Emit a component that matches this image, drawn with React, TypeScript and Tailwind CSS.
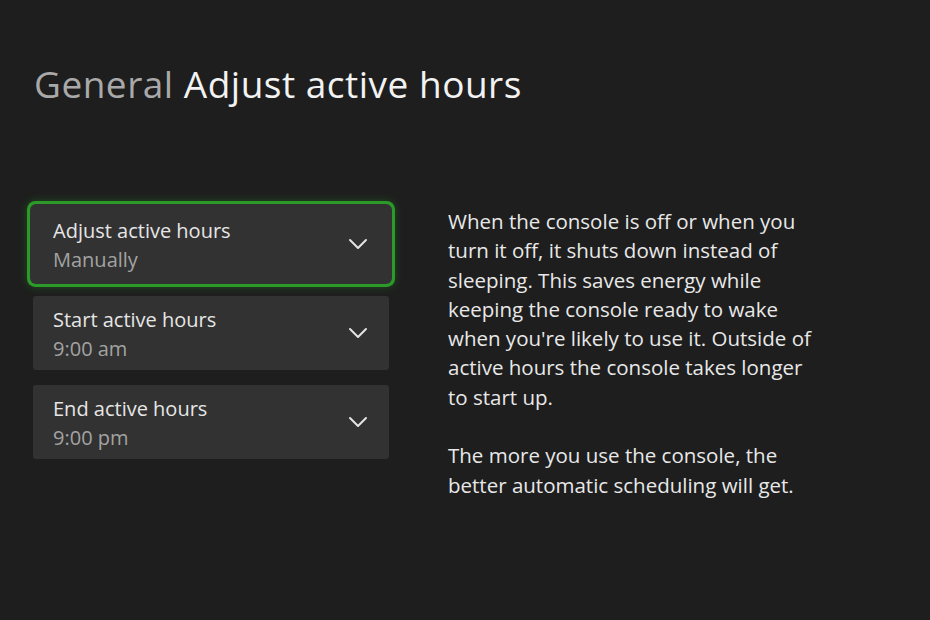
import React from 'react';

// Dropdown rows on the left side of the settings page
const rows = [
  { id: 1, label: 'Adjust active hours', value: 'Manually', focused: true },
  { id: 2, label: 'Start active hours', value: '9:00 am', focused: false },
  { id: 3, label: 'End active hours', value: '9:00 pm', focused: false },
];

const Chevron: React.FC = () => (
  <svg className="h-[12px] w-[20px] text-[#e4e4e4]" viewBox="0 0 20 12" fill="none" stroke="currentColor">
    <path d="M2 2l8 8 8-8" strokeWidth={2} strokeLinecap="round" strokeLinejoin="round" />
  </svg>
);

const Row: React.FC<{ label: string; value: string; focused: boolean }> = ({ label, value, focused }) => (
  <div
    className={`flex h-[74px] w-[356px] items-center justify-between rounded-[3px] bg-[#323232] pl-[20px] pr-[21px] ${
      focused ? 'shadow-[0_0_0_3px_#323232,0_0_0_6px_#2b9a28,0_0_8px_6px_rgba(40,160,40,0.35)]' : ''
    }`}
  >
    <div className="flex flex-col pt-[1px]">
      <span className="text-[20px] leading-[29px] text-[#e6e6e6]">{label}</span>
      <span className="text-[20px] leading-[29px] text-[#a3a3a3]">{value}</span>
    </div>
    <Chevron />
  </div>
);

export default function App() {
  return (
    <div
      className="h-[620px] w-[930px] overflow-hidden bg-[#1e1e1e] pl-[33px]"
      style={{ fontFamily: '"Open Sans", "Noto Sans", sans-serif' }}
    >
      <h1 className="pl-[1px] pt-[56px] text-[37px] leading-[56px] tracking-[0.5px]">
        <span className="text-[#a9a9a9]">General</span>{' '}
        <span className="text-[#f2f2f2]">Adjust active hours</span>
      </h1>

      <div className="mt-[95px] flex">
        <div className="flex flex-col gap-[15px]">
          {rows.map((r) => (
            <Row key={r.id} label={r.label} value={r.value} focused={r.focused} />
          ))}
        </div>

        <div className="ml-[59px] w-[370px] text-[20.5px] leading-[29.3px] text-[#e8e8e8]">
          <p>
            When the console is off or when you turn it off, it shuts down instead of sleeping. This saves
            energy while keeping the console ready to wake when you're likely to use it. Outside of active
            hours the console takes longer to start up.
          </p>
          <p className="mt-[29.3px]">The more you use the console, the better automatic scheduling will get.</p>
        </div>
      </div>
    </div>
  );
}
